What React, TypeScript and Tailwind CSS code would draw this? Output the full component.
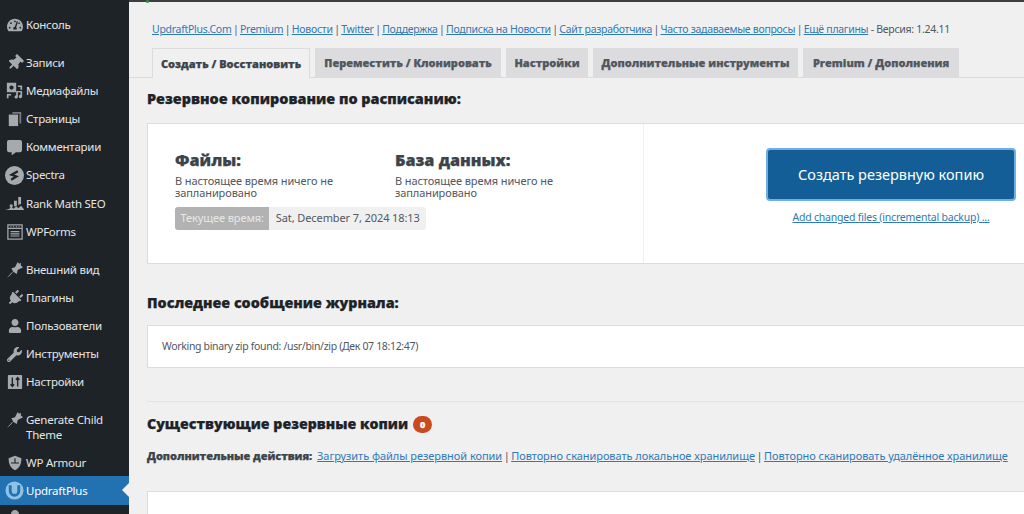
import React from 'react';
import { FaTachometerAlt, FaThumbtack, FaCommentAlt, FaPlug, FaUser, FaWrench } from 'react-icons/fa';

const ic = "w-[16px] h-[16px]";
const heavy = "font-['Open_Sans','Noto_Sans',sans-serif] font-extrabold [-webkit-text-stroke:0.25px_currentColor]";
const linkCls = "text-[#3079b5] underline";

function MediaIcon() {
    return (
        <svg viewBox="0 0 20 20" className="w-[17px] h-[17px]" fill="currentColor">
            <path d="M1 1h11v11H1z M6.500 4a2.500 2.500 0 1 0 0 5 2.500 2.500 0 0 0 0-5z" fillRule="evenodd" />
            <path d="M14 4h5v5h-2V6h-3z M1 14h5v2H3v3H1z" />
            <path d="M19 10.500v6.500a2 2 0 1 1-2-2v-3h-3v5.500a2 2 0 1 1-2-2v-5z" />
        </svg>
    );
}

function PagesIcon() {
    return (
        <svg viewBox="0 0 18 18" className={ic} fill="currentColor">
            <path d="M6 1h10v13h-2V3H6z" opacity="0.65" />
            <path d="M2 4h10.500v13H2z" />
        </svg>
    );
}

function SpectraIcon() {
    return (
        <svg viewBox="0 0 20 20" className="w-[19px] h-[19px]">
            <circle cx="10" cy="10" r="10" fill="currentColor" />
            <path d="M13.5 5.5 7 9.2l5 1.8-5.5 3.5" stroke="#1d2327" strokeWidth="2.4" fill="none" />
        </svg>
    );
}

function RankMathIcon() {
    return (
        <svg viewBox="0 0 20 16" className="w-[19px] h-[15px]" fill="currentColor">
            <path d="M0 15c3-.5 5-1.500 7-3.500L9 13.500l3-2.500 2 2 3-2.500 3 3.500v1z" />
            <path d="M5 9h3v2.500L5 12.500zM9.500 5h3v5l-2 1.500-1-1zM14 1h3v8l-1.500-.500-1.500 1.500z" />
        </svg>
    );
}

function FormsIcon() {
    return (
        <svg viewBox="0 0 18 18" className={ic} fill="none" stroke="currentColor" strokeWidth="1.4">
            <rect x="1" y="1" width="16" height="16" />
            <path d="M1 5h16M4 8.5h10M4 11h10M4 13.5h10M4 3h1M7 3h1M10 3h1M13 3h1" />
        </svg>
    );
}

function SettingsIcon() {
    return (
        <svg viewBox="0 0 18 18" className={ic}>
            <rect x="1" y="1" width="16" height="16" rx="1" fill="currentColor" />
            <path d="M6 4v10M4 11.5 6 14l2-2.5M12 14V4M10 6.5 12 4l2 2.5" stroke="#1d2327" strokeWidth="1.6" fill="none" />
        </svg>
    );
}

function BrushIcon() {
    return (
        <svg viewBox="0 0 20 20" className="w-[18px] h-[18px]" fill="currentColor">
            <path d="M1 19c3-4 5-6 7-7l-2-4 4-1 3-6 1.500 2 2-1v3l2.500 2-6 3-1 4.500-4-2.500C6 14.500 4 17 1 19z" />
        </svg>
    );
}

function ShieldIcon() {
    return (
        <svg viewBox="0 0 20 20" className={ic}>
            <path d="M10 1 18 4c0 7-2 12-8 15C4 16 2 11 2 4z" fill="currentColor" />
            <path d="M10 4v6H5M10 10h5" stroke="#1d2327" strokeWidth="1.4" fill="none" />
        </svg>
    );
}

function UpdraftIcon() {
    return (
        <svg viewBox="0 0 20 20" className="w-[19px] h-[19px]" fill="none">
            <circle cx="10" cy="10" r="9.500" fill="#8ec3e6" />
            <path d="M5.500 4.500v6a4.500 4.500 0 0 0 9 0v-6" stroke="#2271b1" strokeWidth="3" />
        </svg>
    );
}

interface MenuItemProps {
    icon: React.ReactNode;
    label: React.ReactNode;
    className?: string;
}

function MenuItem({ icon, label, className = "" }: MenuItemProps) {
    return (
        <div className={`flex items-start pl-[3px] py-[5px] text-[11.5px] tracking-[-0.25px] leading-[15.5px] text-[#e4e5e6] ${className}`}>
            <span className="w-[23px] h-[18px] flex items-center justify-center text-[#a7aaad] shrink-0 -mt-px">{icon}</span>
            <span>{label}</span>
        </div>
    );
}

function Sidebar() {
    return (
        <aside className="w-[129px] shrink-0 h-full bg-[#1d2327] overflow-hidden pt-[12px]">
            <div className="h-[28.2px]"><MenuItem icon={<FaTachometerAlt className={ic} />} label="Консоль" /></div>
            <div className="h-[9.5px]" />
            <div className="flex flex-col [&>div]:h-[28.2px]">
                <MenuItem icon={<FaThumbtack className={`${ic} rotate-45`} />} label="Записи" />
                <MenuItem icon={<MediaIcon />} label="Медиафайлы" />
                <MenuItem icon={<PagesIcon />} label="Страницы" />
                <MenuItem icon={<FaCommentAlt className="w-[15px] h-[15px]" />} label="Комментарии" />
                <MenuItem icon={<SpectraIcon />} label="Spectra" />
                <MenuItem icon={<RankMathIcon />} label="Rank Math SEO" />
                <MenuItem icon={<FormsIcon />} label="WPForms" />
            </div>
            <div className="h-[9.5px]" />
            <div className="flex flex-col [&>div]:h-[28.2px]">
                <MenuItem icon={<BrushIcon />} label="Внешний вид" />
                <MenuItem icon={<FaPlug className={`${ic} rotate-45`} />} label="Плагины" />
                <MenuItem icon={<FaUser className="w-[14px] h-[14px]" />} label="Пользователи" />
                <MenuItem icon={<FaWrench className="w-[15px] h-[15px]" />} label="Инструменты" />
                <MenuItem icon={<SettingsIcon />} label="Настройки" />
            </div>
            <div className="h-[9.5px]" />
            <MenuItem className="h-[43.5px]" icon={<BrushIcon />} label={<>Generate Child<br />Theme</>} />
            <MenuItem className="h-[25.5px]" icon={<ShieldIcon />} label="WP Armour" />
            <div className="relative bg-[#2271b1] h-[29px]">
                <MenuItem className="text-white pt-[7px]" icon={<UpdraftIcon />} label="UpdraftPlus" />
                <span className="absolute right-0 top-[7px] border-y-[7px] border-r-[7px] border-y-transparent border-r-[#f0f0f1]" />
            </div>
            <MenuItem icon={<FaUser className={ic} />} label="" />
        </aside>
    );
}

const topLinks = ["UpdraftPlus.Com", "Premium", "Новости", "Twitter", "Поддержка", "Подписка на Новости", "Сайт разработчика", "Часто задаваемые вопросы", "Ещё плагины"];
const tabs = [
    { label: "Переместить / Клонировать", cls: "w-[186px]" },
    { label: "Настройки", cls: "w-[82px]" },
    { label: "Дополнительные инструменты", cls: "w-[205px]" },
    { label: "Premium / Дополнения", cls: "w-[156px]" },
];
const extraLinks = ["Загрузить файлы резервной копии", "Повторно сканировать локальное хранилище", "Повторно сканировать удалённое хранилище"];

function Schedule({ title }: { title: string }) {
    return (
        <div className="w-[220px]">
            <h3 className={`text-[16.2px] leading-[20px] text-[#3c434a] ${heavy}`}>{title}</h3>
            <p className="mt-[5px] text-[11px] tracking-[-0.1px] leading-[12px] text-[#50575e]">В настоящее время ничего не<br />запланировано</p>
        </div>
    );
}

export default function App() {
    return (
        <div className="w-[1024px] h-[514px] overflow-hidden flex bg-[#f0f0f1] font-['Noto_Sans','Open_Sans',sans-serif]">
            <Sidebar />
            <main className="flex-1 min-w-0 relative border-t-2 border-[#3c3f42]">
                <span className="absolute left-[17px] -top-[2px] w-[3px] h-[3px] rounded-full bg-[#2e9a3e]" />
                <div className="pl-[23px] pt-[19px] text-[10.5px] tracking-[-0.28px] leading-[16px] text-[#50575e] whitespace-nowrap">
                    {topLinks.map((l, i) => (
                        <span key={l}>
                            {i > 0 && <span className="mx-[1.5px]">|</span>}
                            <a className={linkCls}>{l}</a>
                        </span>
                    ))}
                    <span> - Версия: 1.24.11</span>
                </div>
                <div className={`mt-[11px] h-[30px] pl-[23px] flex gap-[5px] border-b border-[#dcdcde] text-[11px] leading-[30px] text-[#50575e] ${heavy}`}>
                    <div className="w-[158px] h-[30px] text-center bg-[#f0f0f1] border border-b-0 border-[#dcdcde] text-[#3c434a]">Создать / Восстановить</div>
                    {tabs.map((t) => (
                        <div key={t.label} className={`h-[29px] text-center bg-[#dcdcde] ${t.cls}`}>{t.label}</div>
                    ))}
                </div>
                <div className="pl-[18px]">
                    <h2 className={`mt-[11px] text-[14.4px] leading-[20px] text-[#1d2327] ${heavy}`}>Резервное копирование по расписанию:</h2>
                    <section className="mt-[14px] w-[900px] h-[141px] flex bg-white border border-[#dcdcde]">
                        <div className="w-[496px] shrink-0 border-r border-[#f0f0f1] pl-[27px] pt-[26px]">
                            <div className="flex">
                                <Schedule title="Файлы:" />
                                <Schedule title="База данных:" />
                            </div>
                            <div className="mt-[8px] w-fit flex h-[23px] items-center rounded-[3px] overflow-hidden bg-[#f0f0f1] text-[11px] tracking-[-0.1px] text-[#50575e]">
                                <span className="h-full px-[5.5px] flex items-center bg-[#b2b2b2] text-[#e8e8e8]">Текущее время:</span>
                                <span className="px-[6.5px]">Sat, December 7, 2024 18:13</span>
                            </div>
                        </div>
                        <div className="pl-[122px] pt-[24px]">
                            <button className="w-[250px] h-[53px] rounded-[4px] bg-[#135e96] border-2 border-[#72aee6] text-white text-[14.5px]">Создать резервную копию</button>
                            <div className={`mt-[9px] text-center text-[10.5px] tracking-[-0.2px] leading-[15px] ${linkCls}`}>Add changed files (incremental backup) ...</div>
                        </div>
                    </section>
                    <h2 className={`mt-[29px] text-[14.3px] leading-[20px] text-[#1d2327] ${heavy}`}>Последнее сообщение журнала:</h2>
                    <section className="mt-[12px] w-[900px] h-[43px] flex items-center pl-[14px] pt-[1px] bg-white border border-[#dcdcde] text-[10.5px] tracking-[-0.33px] text-[#50575e]">
                        Working binary zip found: /usr/bin/zip (Дек 07 18:12:47)
                    </section>
                    <hr className="mt-[33px] border-t border-[#e4e4e6]" />
                    <h2 className={`mt-[12px] flex items-center gap-[5px] text-[14.2px] leading-[20px] text-[#1d2327] ${heavy}`}>
                        Существующие резервные копии
                        <span className="w-[19px] h-[17px] rounded-full bg-[#ca4a1f] text-white text-[9px] leading-[17px] text-center">0</span>
                    </h2>
                    <div className="mt-[14px] text-[11px] tracking-[-0.05px] leading-[16px] text-[#50575e] whitespace-nowrap">
                        <b className={`mr-[2px] text-[#3c434a] ${heavy}`}>Дополнительные действия:</b>{" "}
                        {extraLinks.map((l, i) => (
                            <span key={l}>
                                {i > 0 && <span className="mx-[1.5px]">|</span>}
                                <a className={linkCls}>{l}</a>
                            </span>
                        ))}
                    </div>
                    <section className="mt-[27px] w-[900px] h-[60px] bg-white border border-[#dcdcde]" />
                </div>
            </main>
        </div>
    );
}
